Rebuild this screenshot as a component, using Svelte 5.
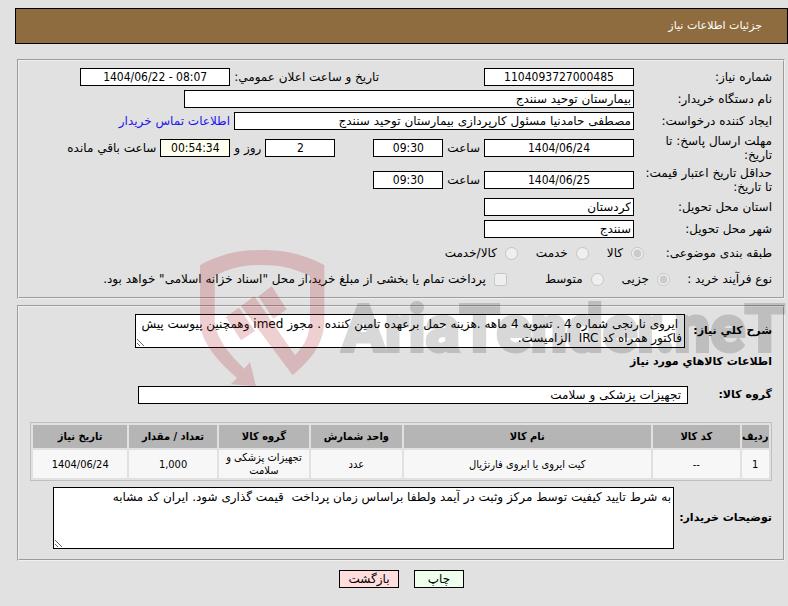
<script>
	const need = {
		number: "1104093727000485",
		announced: "1404/06/22 - 08:07",
		buyer: "بیمارستان توحید سنندج",
		creator: "مصطفی حامدنیا مسئول کارپردازی بیمارستان توحید سنندج",
		province: "کردستان",
		city: "سنندج",
		group: "تجهیزات پزشکی و سلامت",
	};

	const summary =
		" ایروی نارنجی شماره 4 . تسویه 4 ماهه .هزینه حمل برعهده تامین کننده . مجوز imed وهمچنین پیوست پیش فاکتور همراه کد IRC  الزامیست.";
	const notes =
		"به شرط تایید کیفیت توسط مرکز وثبت در آیمد ولطفا براساس زمان پرداخت  قیمت گذاری شود. ایران کد مشابه";

	const categories = ["کالا", "خدمت", "کالا/خدمت"];
	const processes = ["جزیی", "متوسط"];

	const columns = [
		{ id: "row", title: "ردیف", width: 28 },
		{ id: "code", title: "کد کالا", width: 88 },
		{ id: "name", title: "نام کالا", width: 252 },
		{ id: "unit", title: "واحد شمارش", width: 92 },
		{ id: "group", title: "گروه کالا", width: 92 },
		{ id: "count", title: "تعداد / مقدار", width: 89 },
		{ id: "date", title: "تاریخ نیاز", width: 96 },
	];
	const total = columns.reduce((sum, c) => sum + c.width, 0);

	const items = [
		{
			row: "1",
			code: "--",
			name: "کیت ایروی یا ایروی فارنژیال",
			unit: "عدد",
			group: "تجهیزات پزشکی و سلامت",
			count: "1,000",
			date: "1404/06/24",
		},
	];
</script>

<div class="page" dir="rtl">
	<header class="title">جزئیات اطلاعات نیاز</header>

	<section class="box">
		<div class="row">
			<label class="caption" for="number">شماره نیاز:</label>
			<input class="field date" id="number" readonly value={need.number} />
			<label class="far" for="announced">تاریخ و ساعت اعلان عمومي:</label>
			<input class="field date" id="announced" dir="ltr" readonly value={need.announced} />
		</div>
		<div class="row">
			<label class="caption" for="buyer">نام دستگاه خریدار:</label>
			<input class="field buyer" id="buyer" readonly value={need.buyer} />
		</div>
		<div class="row">
			<label class="caption" for="creator">ایجاد کننده درخواست:</label>
			<input class="field creator" id="creator" readonly value={need.creator} />
			<a href="#contact">اطلاعات تماس خریدار</a>
		</div>
		<div class="row tall">
			<label class="caption" for="deadline">مهلت ارسال پاسخ: تا تاریخ:</label>
			<input class="field date" id="deadline" readonly value="1404/06/24" />
			<label for="deadline-time">ساعت</label>
			<input class="field time" id="deadline-time" readonly value="09:30" />
			<input class="field time days" id="days" readonly value="2" />
			<label for="days">روز و</label>
			<input class="field time left" id="left" readonly value="00:54:34" />
			<label for="left">ساعت باقي مانده</label>
		</div>
		<div class="row tall">
			<label class="caption" for="validity">حداقل تاریخ اعتبار قیمت: تا تاریخ:</label>
			<input class="field date" id="validity" readonly value="1404/06/25" />
			<label for="validity-time">ساعت</label>
			<input class="field time" id="validity-time" readonly value="09:30" />
		</div>
		<div class="row">
			<label class="caption" for="province">استان محل تحویل:</label>
			<input class="field place" id="province" readonly value={need.province} />
		</div>
		<div class="row">
			<label class="caption" for="city">شهر محل تحویل:</label>
			<input class="field place" id="city" readonly value={need.city} />
		</div>
		<div class="row options">
			<span class="category">طبقه بندی موضوعی:</span>
			{#each categories as name, i}
				<label class="option">
					<input type="radio" name="category" disabled checked={i === 0} />
					{name}
				</label>
			{/each}
		</div>
		<div class="row options">
			<span class="process">نوع فرآیند خرید :</span>
			{#each processes as name, i}
				<label class="option">
					<input type="radio" name="process" disabled checked={i === 0} />
					{name}
				</label>
			{/each}
			<label class="option treasury">
				<input type="checkbox" disabled />
				پرداخت تمام یا بخشی از مبلغ خرید،از محل "اسناد خزانه اسلامی" خواهد بود.
			</label>
		</div>
	</section>

	<section class="box goods">
		<div class="row">
			<label class="strong" for="summary">شرح کلي نیاز:</label>
			<textarea class="summary" id="summary" readonly value={summary}></textarea>
		</div>
		<h2>اطلاعات کالاهاي مورد نیاز</h2>
		<div class="row group">
			<label class="strong" for="group">گروه کالا:</label>
			<input class="field" id="group" readonly value={need.group} />
		</div>
		<table>
			<colgroup>
				{#each columns as col (col.id)}
					<col style="width: {(col.width / total) * 100}%" />
				{/each}
			</colgroup>
			<thead>
				<tr>
					{#each columns as col (col.id)}
						<th>{col.title}</th>
					{/each}
				</tr>
			</thead>
			<tbody>
				{#each items as item (item.row)}
					<tr>
						{#each columns as col (col.id)}
							<td>{item[col.id]}</td>
						{/each}
					</tr>
				{/each}
			</tbody>
		</table>
		<div class="row">
			<label class="strong long" for="notes">توضیحات خریدار:</label>
			<textarea class="notes" id="notes" readonly value={notes}></textarea>
		</div>
	</section>

	<footer>
		<button class="print" type="button">چاپ</button>
		<button class="back" type="button">بازگشت</button>
	</footer>

	<div class="watermark" dir="ltr">
		<svg viewBox="30 29 375 411" width="125" height="137" aria-hidden="true">
			<path
				d="M30 75C80 45 140 29 215 29S350 45 403 75V240C403 315 355 365 308 405L185 240L153 197L193 168L315 345C345 312 360 285 360 235V107C310 83 270 74 215 74S120 83 74 107V240C76 295 125 350 163 385L180 365L198 438L122 432L141 413C85 365 30 305 30 240Z"
			/>
			<path d="M205 168L245 138L290 207L250 235Z" />
			<path d="M107 230L147 202L195 272L153 300Z" />
		</svg>
		<span>AriaTender.neT</span>
	</div>
</div>

<style>
	:global(body) {
		margin: 0;
		background: #e1e1e1;
	}
	.page {
		position: relative;
		overflow: hidden;
		padding: 8px 0 16px;
		color: #000;
		font: 12px/14px "DejaVu Sans", Tahoma, sans-serif;
	}
	input,
	textarea,
	button {
		box-sizing: border-box;
		font: inherit;
		color: inherit;
	}
	.title {
		margin-left: 15px;
		padding: 10px 25px;
		border: 1px solid #000;
		background: #8e6c3f;
		color: #fff;
		font-size: 11px;
	}
	.box {
		margin: 15px 3px 0 17px;
		padding: 5px 11px;
		border: 2px groove #f0f0f0;
	}
	.row {
		display: flex;
		align-items: center;
		gap: 4px;
		min-height: 22px;
		white-space: nowrap;
	}
	.tall {
		min-height: 32px;
	}
	.caption {
		box-sizing: border-box;
		flex: none;
		width: 134px;
		padding-left: 6px;
		white-space: normal;
	}
	.field {
		height: 18px;
		padding: 0 2px;
		border: 1px solid #000;
		background: #fff;
		text-align: right;
	}
	.date,
	.place {
		width: 150px;
	}
	.time {
		width: 70px;
	}
	.date,
	.time {
		font-family: "DejaVu Sans Condensed", Tahoma, sans-serif;
		text-align: center;
	}
	.buyer {
		width: 450px;
	}
	.creator {
		width: 400px;
	}
	.far {
		margin-right: 101px;
	}
	.days {
		margin-right: 34px;
	}
	.left {
		background: #fffff0;
	}
	a {
		color: #2214ee;
		text-decoration: none;
	}
	.options {
		min-height: 26px;
		gap: 18px;
	}
	.category {
		width: 110px;
	}
	.process {
		width: 84px;
	}
	.option {
		display: flex;
		align-items: center;
		gap: 8px;
	}
	.option input {
		width: 13px;
		height: 13px;
		margin: 0;
	}
	.treasury {
		margin-right: 20px;
	}
	.goods {
		margin-top: 6px;
		padding: 7px 11px 10px;
	}
	.strong,
	h2 {
		font-size: 11px;
		font-weight: bold;
	}
	.strong {
		flex: none;
		min-width: 83px;
	}
	.long {
		min-width: 94px;
	}
	h2 {
		margin: 7px 0 15px;
	}
	textarea {
		margin: 0;
		padding: 2px;
		border: 1px solid #000;
		background: #fff;
	}
	.summary {
		width: 550px;
		height: 34px;
		overflow: hidden;
	}
	.group .strong {
		min-width: 80px;
	}
	.group .field {
		width: 550px;
		padding: 0 6px;
	}
	table {
		width: 100%;
		margin: 16px 0 6px;
		border: 1px solid #bfbfbf;
		border-spacing: 2px;
		table-layout: fixed;
		font: 11px/13px "DejaVu Sans Condensed", Tahoma, sans-serif;
		text-align: center;
	}
	th {
		height: 23px;
		padding: 0;
		background: #b5b5b5;
		white-space: nowrap;
	}
	td {
		height: 28px;
		padding: 0 2px;
		background: #f7f7f7;
	}
	.notes {
		width: 621px;
		height: 62px;
	}
	footer {
		display: flex;
		justify-content: center;
		gap: 15px;
		margin-top: 9px;
		padding-left: 15px;
	}
	button {
		height: 18px;
		padding: 0;
		border: 1px solid #000;
	}
	.print {
		width: 50px;
		background: #eeffee;
	}
	.back {
		width: 60px;
		background: #ffdddd;
	}
	.watermark {
		position: absolute;
		top: 250px;
		left: 200px;
		display: flex;
		gap: 17px;
		pointer-events: none;
	}
	.watermark svg {
		fill: rgba(170, 20, 30, 0.2);
	}
	.watermark span {
		color: #000;
		font: bold 64px/160px Roboto, "Liberation Sans", sans-serif;
		white-space: nowrap;
		opacity: 0.15;
		-webkit-text-stroke: 4px #000;
	}
</style>
